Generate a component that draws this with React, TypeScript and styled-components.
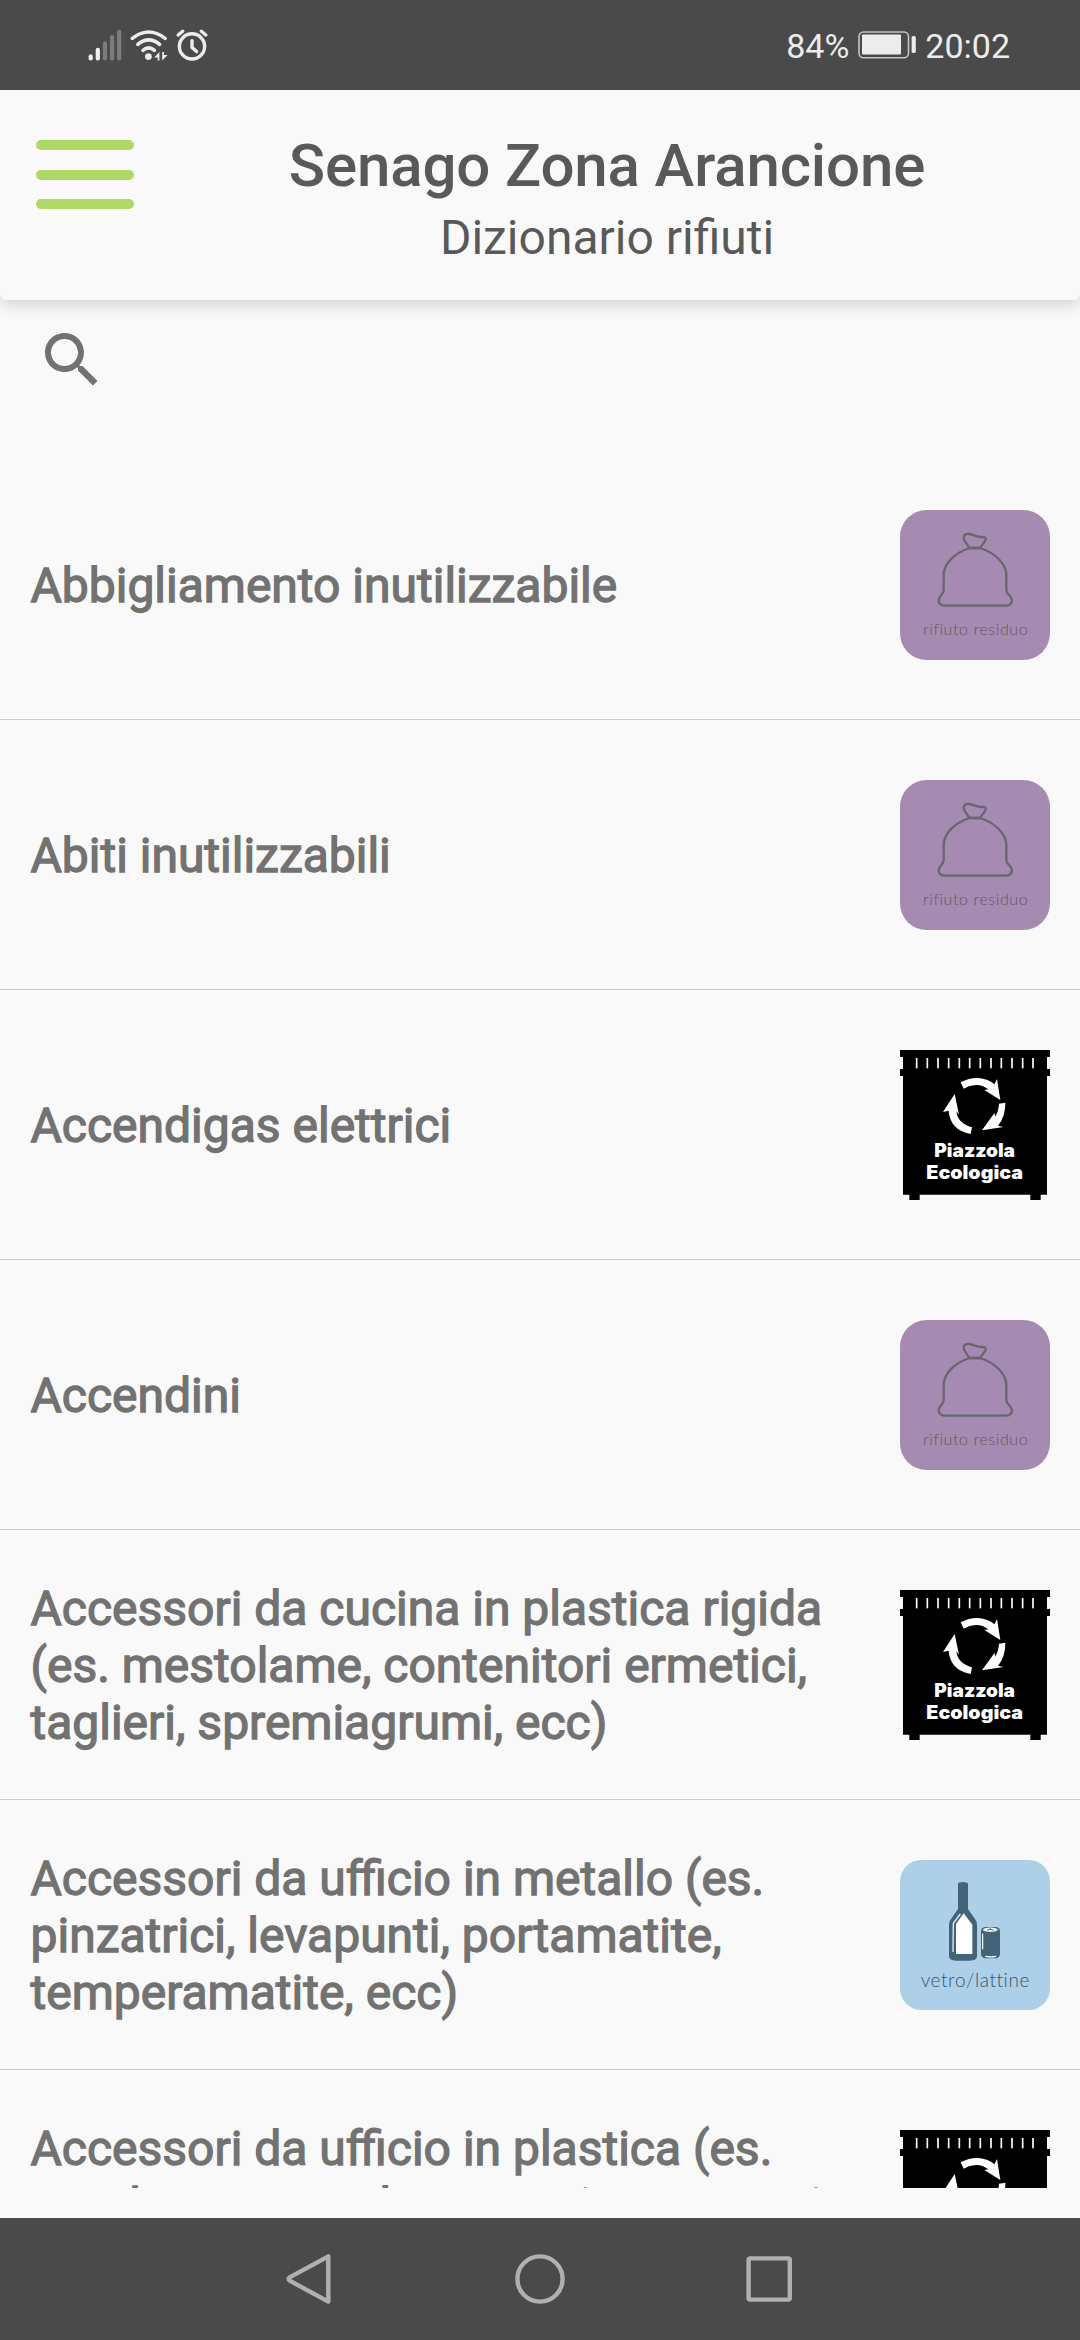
import React from "react";
import styled, { createGlobalStyle } from "styled-components";

const GlobalStyle = createGlobalStyle`
  *, *::before, *::after { box-sizing: border-box; }
  body { margin: 0; background: #f9f9f9; font-family: Roboto, sans-serif; }
  svg { display: block; flex: none; }
`;

const Screen = styled.div`
  display: flex;
  flex-direction: column;
  width: 1080px;
  height: 2340px;
  overflow: hidden;
  background: #f9f9f9;
`;

const StatusBar = styled.div`
  position: relative;
  z-index: 2;
  flex: none;
  height: 90px;
  padding: 0 70px 0 88px;
  display: flex;
  align-items: center;
  justify-content: space-between;
  background: #4a4a4a;
  color: #ececec;
`;

const StatusGroup = styled.div<{ $gap: number }>`
  display: flex;
  align-items: center;
  gap: ${(p) => p.$gap}px;
`;

const StatusText = styled.span`
  font-size: 34px;
  line-height: 40px;
  padding-top: 2px;
`;

const Header = styled.header`
  position: relative;
  z-index: 1;
  flex: none;
  height: 210px;
  padding: 50px 0 0 36px;
  display: flex;
  align-items: flex-start;
  background: #f9f9f9;
  border-radius: 6px;
  box-shadow: 0 6px 14px rgba(0, 0, 0, 0.14);
`;

const MenuButton = styled.button`
  flex: none;
  width: 98px;
  padding: 0;
  border: 0;
  background: none;
  display: flex;
  flex-direction: column;
  gap: 19.5px;
`;

const MenuLine = styled.span`
  height: 10px;
  border-radius: 5px;
  background: #afd867;
`;

const Titles = styled.div`
  flex: 1;
  display: flex;
  flex-direction: column;
  align-items: center;
  margin-top: -9px;
  color: #595959;
`;

const Title = styled.h1`
  margin: 0;
  font-size: 60px;
  font-weight: 500;
  line-height: 70px;
  letter-spacing: -0.14px;
`;

const Subtitle = styled.h2`
  margin: 0;
  font-size: 48px;
  font-weight: 400;
  line-height: 56px;
  padding-top: 9px;
`;

const SearchBar = styled.div`
  flex: none;
  height: 150px;
  padding: 24px 36px 0;
`;

const List = styled.ul`
  flex: 1;
  min-height: 0;
  margin: 0 0 30px;
  padding: 0;
  list-style: none;
  overflow: hidden;
`;

const Row = styled.li`
  height: 270px;
  padding: 0 30px 0 30.5px;
  display: flex;
  align-items: center;
  justify-content: space-between;
  border-bottom: 1px solid #cecece;
`;

const Label = styled.p`
  margin: 0;
  padding-top: 1px;
  width: 860px;
  font-size: 48px;
  line-height: 57px;
  color: #727272;
  -webkit-text-stroke: 1.3px #727272;
`;

const NavBar = styled.nav`
  flex: none;
  height: 122px;
  padding: 0 195px;
  display: grid;
  grid-template-columns: repeat(3, 1fr);
  align-items: center;
  justify-items: center;
  background: #4a4a4a;
`;

const IconCaption = styled.text`
  font-family: Lato, sans-serif;
  font-weight: 300;
  font-variant-ligatures: none;
`;

const Signal = () => (
  <svg width="34" height="32" viewBox="88 29 34 32" strokeWidth="4.2" strokeLinecap="round">
    <path d="M90.7 56.3V58.4M97.8 49.8V58.4" stroke="#f2f2f2" />
    <path d="M105 43.4V58.4M112.1 37.2V58.4M119.2 31.8V58.4" stroke="#7c7c7c" />
  </svg>
);

const Wifi = () => (
  <svg width="40" height="32" viewBox="129 29 40 32" fill="none" stroke="#ececec" strokeWidth="3.6" strokeLinecap="round">
    <path d="M132.3 38.4Q148.7 25.6 165.1 38.4" />
    <path d="M137.8 44.4Q148.7 35.4 159.6 44.4" />
    <path d="M143 50.4Q148.7 45.4 154.4 50.4" />
    <circle cx="148.4" cy="56.6" r="3.4" fill="#ececec" stroke="none" />
    <path d="M159.4 52V60.6H157.7V57.6H154.3ZM162.2 60.6V52H164V55H167.6Z" fill="#ececec" stroke="none" />
  </svg>
);

const Alarm = () => (
  <svg width="32" height="32" viewBox="176 29 32 32" fill="none" stroke="#ececec" strokeWidth="3.4" strokeLinecap="round">
    <circle cx="192" cy="46.4" r="12.6" />
    <path d="M192 40.6V47.4L196.6 51.6" strokeLinejoin="round" />
    <path d="M178.2 35L182.6 31.2M201.4 31.2L205.8 35" />
  </svg>
);

const Battery = () => (
  <svg width="58" height="28" viewBox="858 32 58 28">
    <rect x="859" y="33" width="49.5" height="25.8" rx="4.5" fill="none" stroke="#c4c4c4" strokeWidth="1.6" />
    <rect x="862" y="35.6" width="39" height="20" rx="1" fill="#ececec" />
    <rect x="911.6" y="37" width="4.2" height="17" rx="1.6" fill="#ececec" />
  </svg>
);

const SearchIcon = () => (
  <svg width="72" height="72" viewBox="0 0 24 24" fill="#727272">
    <path d="M15.5 14h-.79l-.28-.27C15.41 12.59 16 11.11 16 9.5 16 5.91 13.09 3 9.5 3S3 5.91 3 9.5 5.91 16 9.5 16c1.61 0 3.09-.59 4.23-1.57l.27.28v.79l5 4.99L20.49 19l-4.99-5zm-6 0C7.01 14 5 11.99 5 9.5S7.01 5 9.5 5 14 7.01 14 9.5 11.99 14 9.5 14z" />
  </svg>
);

const ResidualIcon = () => (
  <svg width="150" height="150" viewBox="60 60 450 450">
    <rect x="60" y="60" width="450" height="450" rx="80" fill="#a58bb1" />
    <g fill="none" stroke="#6b6570" strokeWidth="7" strokeLinejoin="round">
      <path d="M268 174C222 190 191 222 191 255V300C191 314 176 317 176 331Q177 347 196 347H376Q395 347 396 331C395 316 379 314 379 300V255C379 222 346 189 300 174Z" />
      <path d="M268 174C263 163 251 153 251 143Q252 130 268 132C284 136 294 142 308 141Q319 141 317 149C314 159 305 164 300 174Z" />
    </g>
    <IconCaption x="129" y="435" fontSize="48" fill="#5f5867" textLength="314">
      rifiuto residuo
    </IconCaption>
  </svg>
);

const slits = [110, 142, 174, 206, 238, 269, 301, 333, 364, 396, 428, 459];

const DepotIcon = () => (
  <svg width="150" height="150" viewBox="60 60 450 450">
    <path d="M60 60H510V81H501V117H510V138H501V494H482V510H451V494H119V510H88V494H69V138H60V117H69V81H60Z" />
    {slits.map((x) => (
      <rect key={x} x={x - 2.5} y="84" width="5" height="31" fill="#fff" />
    ))}
    <g fill="#fff">
      <path d="M242 157Q268 143 295 144Q325 146 343 163L351 147L361 210L313 180L325 178Q307 164 287 165Q268 166 251 176Z" />
      <path d="M357 221L376 218Q377 258 354 287L370 291L306 301L344 248L345 260Q356 244 357 221Z" />
      <path d="M276 292L272 312Q210 300 206 242L189 246L224 192L237 254L229 244Q233 281 276 292Z" />
      <g fontFamily="Inter, 'Liberation Sans', sans-serif" fontWeight="900" fontSize="55">
        <text x="163" y="382" textLength="242" lengthAdjust="spacingAndGlyphs">Piazzola</text>
        <text x="139" y="447" textLength="290" lengthAdjust="spacingAndGlyphs">Ecologica</text>
      </g>
    </g>
  </svg>
);

const GlassIcon = () => (
  <svg width="150" height="150" viewBox="60 60 450 450">
    <rect x="60" y="60" width="450" height="450" rx="64" fill="#aecfe8" />
    <path d="M234 131Q236 126 249 126Q262 126 264 131V207L287 240Q291 246 291 254V348Q291 362 270 362H228Q207 362 207 348V254Q207 246 211 240L234 207Z" fill="#436478" />
    <path d="M251 220L277 254V342H228V252Z" fill="#fff" />
    <path d="M241 222L220 250L219 336" fill="none" stroke="#e6eff5" strokeWidth="4" />
    <rect x="303" y="261" width="57" height="94" rx="13" fill="#436478" />
    <ellipse cx="331" cy="269" rx="22" ry="6.5" fill="#fff" />
    <path d="M331 264V269M321 271Q331 265 341 271" fill="none" stroke="#436478" strokeWidth="3" />
    <path d="M308 282V326M317 349Q331 352 347 349" fill="none" stroke="#fff" strokeWidth="3.5" strokeLinecap="round" />
    <IconCaption x="122" y="441" fontSize="57" fill="#34566b" textLength="326">
      vetro/lattine
    </IconCaption>
  </svg>
);

const icons = { residual: ResidualIcon, depot: DepotIcon, glass: GlassIcon };

const items: { name: string; kind: keyof typeof icons }[] = [
  { name: "Abbigliamento inutilizzabile", kind: "residual" },
  { name: "Abiti inutilizzabili", kind: "residual" },
  { name: "Accendigas elettrici", kind: "depot" },
  { name: "Accendini", kind: "residual" },
  { name: "Accessori da cucina in plastica rigida (es. mestolame, contenitori ermetici, taglieri, spremiagrumi, ecc)", kind: "depot" },
  { name: "Accessori da ufficio in metallo (es. pinzatrici, levapunti, portamatite, temperamatite, ecc)", kind: "glass" },
  { name: "Accessori da ufficio in plastica (es. vaschette portadocumenti, portamatite, ecc)", kind: "depot" },
];

export default function App() {
  return (
    <>
      <GlobalStyle />
      <Screen>
        <StatusBar>
          <StatusGroup $gap={7}>
            <Signal />
            <Wifi />
            <Alarm />
          </StatusGroup>
          <StatusGroup $gap={9}>
            <StatusText>84%</StatusText>
            <Battery />
            <StatusText>20:02</StatusText>
          </StatusGroup>
        </StatusBar>
        <Header>
          <MenuButton aria-label="Menu">
            <MenuLine />
            <MenuLine />
            <MenuLine />
          </MenuButton>
          <Titles>
            <Title>Senago Zona Arancione</Title>
            <Subtitle>Dizionario rifiuti</Subtitle>
          </Titles>
        </Header>
        <SearchBar>
          <SearchIcon />
        </SearchBar>
        <List>
          {items.map(({ name, kind }) => {
            const Icon = icons[kind];
            return (
              <Row key={name}>
                <Label>{name}</Label>
                <Icon />
              </Row>
            );
          })}
        </List>
        <NavBar>
          <svg width="50" height="54" viewBox="0 0 50 54" fill="none" stroke="#b0b0b0" strokeWidth="4.4" strokeLinejoin="round">
            <path d="M43.3 4.4V49.6L4.6 28.6Q2.6 27 4.6 25.4Z" />
          </svg>
          <svg width="54" height="54" viewBox="0 0 54 54" fill="none" stroke="#b0b0b0" strokeWidth="4.4">
            <circle cx="27" cy="27" r="22.6" />
          </svg>
          <svg width="50" height="50" viewBox="0 0 50 50" fill="none" stroke="#b0b0b0" strokeWidth="4.4">
            <rect x="3.6" y="4.4" width="41.2" height="41.2" rx="1.6" />
          </svg>
        </NavBar>
      </Screen>
    </>
  );
}
